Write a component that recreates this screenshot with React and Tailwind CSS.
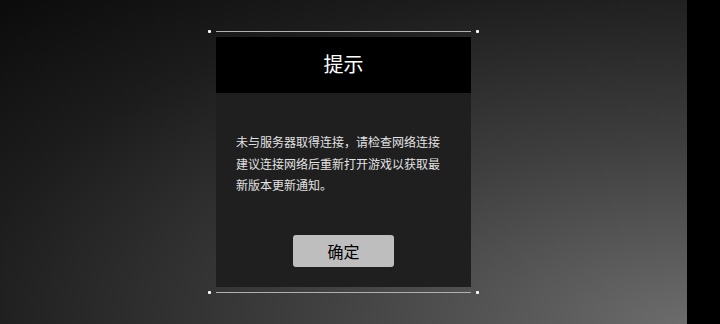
import React from "react";

export default function App() {
  return (
    <div
      className="w-[720px] h-[324px] flex bg-black overflow-hidden"
      style={{ fontFamily: '"Noto Sans CJK SC", "Noto Sans", sans-serif' }}
    >
      <div className="w-[687px] h-full bg-[radial-gradient(ellipse_at_100%_100%,#6c6c6c_0%,#3e3e3e_40%,#1c1c1c_75%,#0b0b0b_100%)] pt-[30px] pl-[208px]">
        <div className="w-[271px] flex flex-col">
          <div className="flex items-center h-[3px]">
            <div className="w-[3px] h-[3px] bg-white rounded-[1px]" />
            <div className="flex-1 mx-[5px] h-px bg-[#b0b0b0]" />
            <div className="w-[3px] h-[3px] bg-white rounded-[1px]" />
          </div>
          <div className="mx-[8px] mt-[4px] w-[255px] flex flex-col">
            <div className="h-[56px] bg-black flex items-center justify-center text-white text-[20px] leading-none pb-[3px]">
              提示
            </div>
            <div className="h-[194px] bg-[#1f1f1f] flex flex-col items-center pt-[38px]">
              <div className="w-full px-[20px] text-[12px] leading-[21.5px] text-[#e2e2e2] whitespace-nowrap">
                <div>未与服务器取得连接，请检查网络连接</div>
                <div>建议连接网络后重新打开游戏以获取最</div>
                <div>新版本更新通知。</div>
              </div>
              <div className="mt-[39px] w-[101px] h-[32px] rounded-[3px] bg-[#bebebe] flex items-center justify-center text-black text-[16px] leading-none">
                确定
              </div>
            </div>
          </div>
          <div className="flex items-center h-[3px] mt-[4px]">
            <div className="w-[3px] h-[3px] bg-white rounded-[1px]" />
            <div className="flex-1 mx-[5px] h-px bg-[#b0b0b0]" />
            <div className="w-[3px] h-[3px] bg-white rounded-[1px]" />
          </div>
        </div>
      </div>
      <div className="flex-1 bg-black" />
    </div>
  );
}
